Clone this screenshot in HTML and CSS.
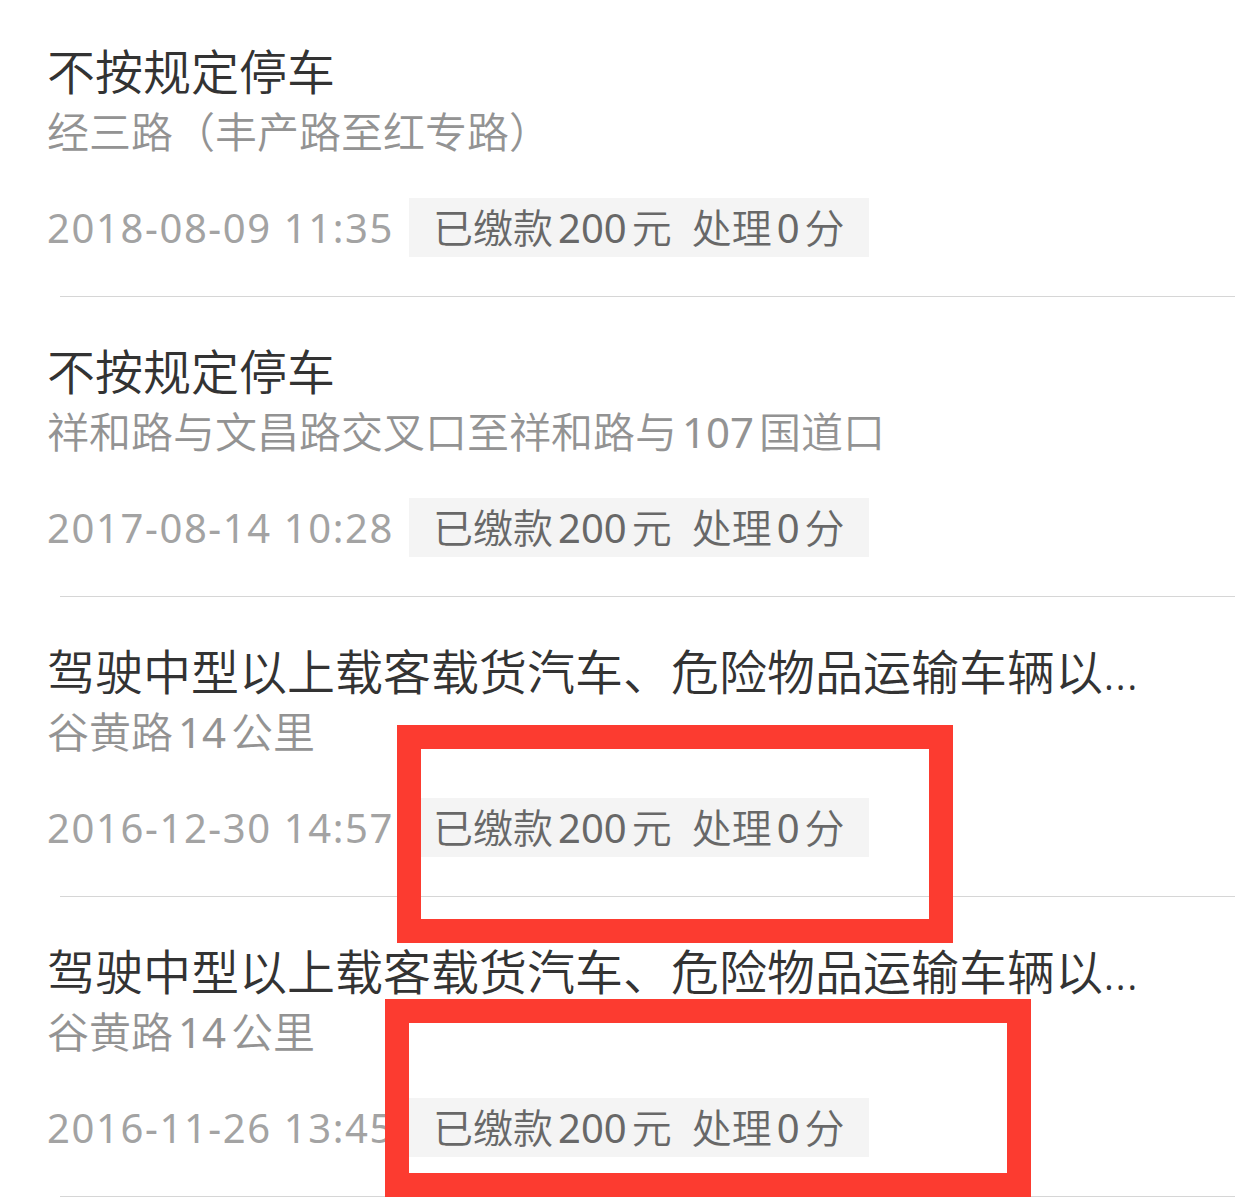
FILE: index.html
```html
<!DOCTYPE html>
<html lang="zh-CN">
<head>
	<meta charset="UTF-8">
	<title>违法记录</title>
	<link rel="stylesheet" href="styles.css">
</head>
<body>
	<div class="list">
		<div class="item">
			<div class="body">
				<div class="title">不按规定停车</div>
				<div class="place">经三路（丰产路至红专路）</div>
				<div class="meta">
					<span class="time">2018-08-09 11:35</span>
					<span class="tag">已缴款<span class="num">200</span>元<span class="score">处理<span class="num">0</span>分</span></span>
				</div>
			</div>
			<div class="line"></div>
		</div>
		<div class="item">
			<div class="body">
				<div class="title">不按规定停车</div>
				<div class="place">祥和路与文昌路交叉口至祥和路与<span class="num">107</span>国道口</div>
				<div class="meta">
					<span class="time">2017-08-14 10:28</span>
					<span class="tag">已缴款<span class="num">200</span>元<span class="score">处理<span class="num">0</span>分</span></span>
				</div>
			</div>
			<div class="line"></div>
		</div>
		<div class="item">
			<div class="body">
				<div class="title long">驾驶中型以上载客载货汽车、危险物品运输车辆以外的其他机动车行驶超过规定时速</div>
				<div class="place">谷黄路<span class="num">14</span>公里</div>
				<div class="meta">
					<span class="time">2016-12-30 14:57</span>
					<span class="tag">已缴款<span class="num">200</span>元<span class="score">处理<span class="num">0</span>分</span></span>
				</div>
			</div>
			<div class="line"></div>
		</div>
		<div class="item">
			<div class="body">
				<div class="title long">驾驶中型以上载客载货汽车、危险物品运输车辆以外的其他机动车行驶超过规定时速</div>
				<div class="place">谷黄路<span class="num">14</span>公里</div>
				<div class="meta">
					<span class="time">2016-11-26 13:45</span>
					<span class="tag">已缴款<span class="num">200</span>元<span class="score">处理<span class="num">0</span>分</span></span>
				</div>
			</div>
			<div class="line"></div>
		</div>
	</div>
	<!-- 红框标注 -->
	<div class="mark mark-a"></div>
	<div class="mark mark-b"></div>
</body>
</html>
```

FILE: styles.css
```css
html, body{
	margin: 0;
	padding: 0;
	background: #fff;
}
body{
	font-family: "Noto Sans", "Noto Sans CJK SC", sans-serif;
	font-weight: 350;
	overflow: hidden;
}
.list{
	margin-top: -3px;
}
.body{
	padding: 45px 0 39px 47px;
}
.title{
	font-size: 48px;
	line-height: 60px;
	color: #333;
	white-space: nowrap;
}
.title.long{
	max-width: 1110px;
	overflow: hidden;
	text-overflow: ellipsis;
}
.place{
	font-size: 42px;
	line-height: 60px;
	color: #939393;
	white-space: nowrap;
}
.num{
	margin: 0 5px;
	font-weight: 400;
}
.meta{
	display: flex;
	align-items: center;
	margin-top: 36px;
}
.time{
	font-size: 40px;
	font-weight: 400;
	letter-spacing: 1.6px;
	color: #a3a3a3;
	white-space: nowrap;
}
.tag{
	margin-left: 15px;
	padding: 0 24px;
	height: 59px;
	line-height: 59px;
	font-size: 40px;
	color: #686868;
	background: #f4f4f4;
	white-space: nowrap;
}
.score{
	margin-left: 20px;
}
.line{
	margin-left: 60px;
	height: 1px;
	background: #d6d6d6;
}
.mark{
	position: absolute;
	box-sizing: border-box;
	border: 24px solid #fc3b30;
}
.mark-a{
	left: 397px;
	top: 725px;
	width: 556px;
	height: 218px;
}
.mark-b{
	left: 385px;
	top: 999px;
	width: 646px;
	height: 198px;
}
```
